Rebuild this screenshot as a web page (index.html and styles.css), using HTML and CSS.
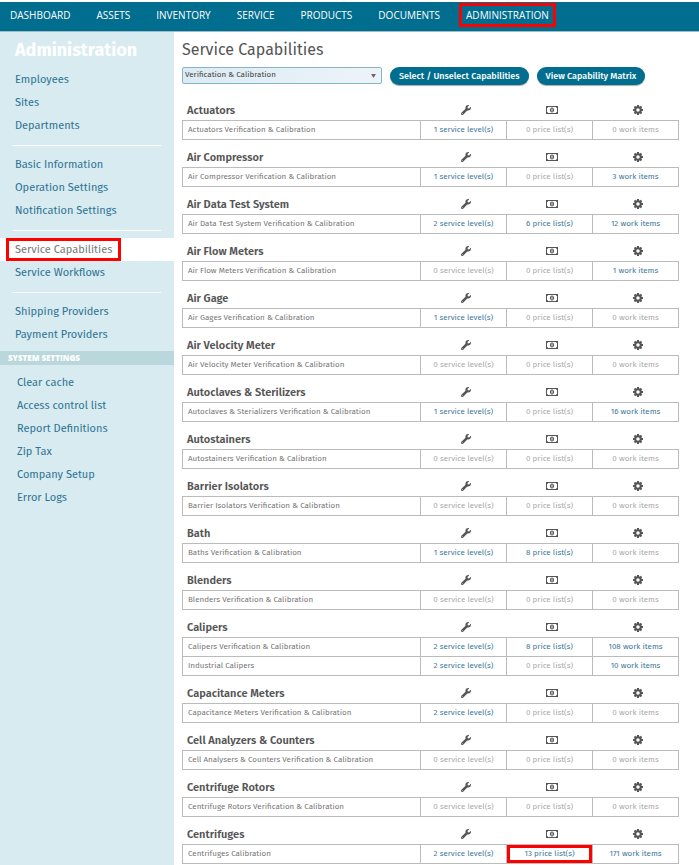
FILE: index.html
```html
<!DOCTYPE html>
<html lang="en">
<head>
  <meta charset="UTF-8" />
  <meta name="viewport" content="width=device-width, initial-scale=1" />
  <title>Service Capabilities</title>
  <link rel="stylesheet" href="styles.css">
</head>
<body>
  <svg class="sprite" aria-hidden="true">
    <symbol id="wrench" viewBox="0 0 512 512">
      <path d="M507.73 109.1c-2.24-9.03-13.54-12.09-20.12-5.51l-74.36 74.36-67.88-11.31-11.31-67.88 74.36-74.36c6.62-6.62 3.43-17.9-5.66-20.16-47.38-11.74-99.55.91-136.58 37.93-39.64 39.64-50.55 97.1-34.05 147.2L18.74 402.76c-24.99 24.99-24.99 65.51 0 90.5 24.99 24.99 65.51 24.99 90.5 0l213.21-213.21c50.12 16.71 107.47 5.68 147.37-34.22 37.07-37.07 49.7-89.32 37.91-136.73zM64 472c-13.25 0-24-10.75-24-24 0-13.26 10.75-24 24-24s24 10.74 24 24c0 13.25-10.75 24-24 24z" />
    </symbol>
    <symbol id="money" viewBox="0 0 12 8">
      <path fill-rule="evenodd" d="M0 0h12v8H0zM2 1A1 1 0 0 1 1 2v4A1 1 0 0 1 2 7h8A1 1 0 0 1 11 6v-4A1 1 0 0 1 10 1z" />
      <path fill-rule="evenodd" d="M6 1.500c1.300 0 2 1.100 2 2.500s-.7 2.500-2 2.500-2-1.100-2-2.500.7-2.500 2-2.500zM5.500 2.500v3h1v-3z" />
    </symbol>
    <symbol id="cog" viewBox="0 0 20 20">
      <circle cx="10" cy="10" r="5.500" fill="none" stroke="currentColor" stroke-width="4" />
      <path stroke="currentColor" stroke-width="4" d="M10 0v4M10 16v4M0 10h4M16 10h4M3 3l3 3M14 14l3 3M3 17l3-3M14 6l3-3" />
    </symbol>
  </svg>

  <nav class="topnav">
    <a href="#">DASHBOARD</a>
    <a href="#">ASSETS</a>
    <a href="#">INVENTORY</a>
    <a href="#">SERVICE</a>
    <a href="#">PRODUCTS</a>
    <a href="#">DOCUMENTS</a>
    <a href="#" class="marked">ADMINISTRATION</a>
  </nav>

  <div class="page">
    <aside class="sidebar">
      <h2>Administration</h2>
      <ul>
        <li><a href="#">Employees</a></li>
        <li><a href="#">Sites</a></li>
        <li><a href="#">Departments</a></li>
      </ul>
      <hr>
      <ul>
        <li><a href="#">Basic Information</a></li>
        <li><a href="#">Operation Settings</a></li>
        <li><a href="#">Notification Settings</a></li>
      </ul>
      <hr>
      <ul>
        <li class="active"><a href="#" class="marked">Service Capabilities</a></li>
        <li><a href="#">Service Workflows</a></li>
      </ul>
      <hr>
      <ul>
        <li><a href="#">Shipping Providers</a></li>
        <li><a href="#">Payment Providers</a></li>
      </ul>
      <h3>SYSTEM SETTINGS</h3>
      <ul class="system">
        <li><a href="#">Clear cache</a></li>
        <li><a href="#">Access control list</a></li>
        <li><a href="#">Report Definitions</a></li>
        <li><a href="#">Zip Tax</a></li>
        <li><a href="#">Company Setup</a></li>
        <li><a href="#">Error Logs</a></li>
      </ul>
    </aside>

    <main>
      <h1>Service Capabilities</h1>
      <div class="toolbar">
        <div class="picker">
          <select aria-label="Capability type">
            <option>Verification &amp; Calibration</option>
          </select>
          <svg viewBox="0 0 6 5"><path d="M0 0h6L3 5z" /></svg>
        </div>
        <button type="button">Select / Unselect Capabilities</button>
        <button type="button">View Capability Matrix</button>
      </div>
      <div id="capabilities"></div>
    </main>
  </div>

  <script>
    // name, then rows of [capability, service levels, price lists, work items]
    const groups = [
      ["Actuators", ["Actuators Verification & Calibration", 1, 0, 0]],
      ["Air Compressor", ["Air Compressor Verification & Calibration", 1, 0, 3]],
      ["Air Data Test System", ["Air Data Test System Verification & Calibration", 2, 6, 12]],
      ["Air Flow Meters", ["Air Flow Meters Verification & Calibration", 0, 0, 1]],
      ["Air Gage", ["Air Gages Verification & Calibration", 1, 0, 0]],
      ["Air Velocity Meter", ["Air Velocity Meter Verification & Calibration", 0, 0, 0]],
      ["Autoclaves & Sterilizers", ["Autoclaves & Sterializers Verification & Calibration", 1, 0, 16]],
      ["Autostainers", ["Autostainers Verification & Calibration", 0, 0, 0]],
      ["Barrier Isolators", ["Barrier Isolators Verification & Calibration", 0, 0, 0]],
      ["Bath", ["Baths Verification & Calibration", 1, 8, 0]],
      ["Blenders", ["Blenders Verification & Calibration", 0, 0, 0]],
      ["Calipers", ["Calipers Verification & Calibration", 2, 8, 108], ["Industrial Calipers", 2, 0, 10]],
      ["Capacitance Meters", ["Capacitance Meters Verification & Calibration", 2, 0, 0]],
      ["Cell Analyzers & Counters", ["Cell Analysers & Counters Verification & Calibration", 0, 0, 0]],
      ["Centrifuge Rotors", ["Centrifuge Rotors Verification & Calibration", 0, 0, 0]],
      ["Centrifuges", ["Centrifuges Calibration", 2, 13, 171]]
    ];

    const escape = text => text.replace(/&/g, "&amp;");
    const icon = name => `<th><svg class="${name}" aria-hidden="true"><use href="#${name}"></use></svg></th>`;

    function countCell(count, label) {
      const marked = count === 13 ? ' class="marked"' : "";
      return `<td${marked}><a href="#"${count ? "" : ' class="none"'}>${count} ${label}</a></td>`;
    }

    document.getElementById("capabilities").innerHTML = groups.map(([name, ...rows]) => `
      <table>
        <thead>
          <tr><th>${escape(name)}</th>${icon("wrench")}${icon("money")}${icon("cog")}</tr>
        </thead>
        <tbody>
          ${rows.map(([title, levels, prices, items]) => `
            <tr>
              <td>${escape(title)}</td>
              ${countCell(levels, "service level(s)")}
              ${countCell(prices, "price list(s)")}
              ${countCell(items, "work items")}
            </tr>`).join("")}
        </tbody>
      </table>`).join("");
  </script>
</body>
</html>
```
FILE: styles.css
```css
* {
  box-sizing: border-box;
}
body {
  margin: 0;
  padding-top: 2px;
  min-height: 100vh;
  display: flex;
  flex-direction: column;
  font-family: "Fira Sans", "Noto Sans", sans-serif;
  color: #555;
  background: #fff;
}
a {
  color: #2f7391;
  text-decoration: none;
}
h1, h2, h3, ul {
  margin: 0;
  padding: 0;
}
.sprite {
  position: absolute;
  width: 0;
  height: 0;
}
.marked {
  position: relative;
}
.marked::after {
  content: "";
  position: absolute;
  inset: 0;
  border: 3px solid #f00;
}

/* top bar */
.topnav {
  display: flex;
  gap: 12px;
  height: 30px;
  padding: 1px 3px 0;
  background: #026e8f;
  border-bottom: 1px solid #9dbcc6;
}
.topnav a {
  height: 24px;
  padding: 0 7px;
  font: 10px/24px "Open Sans", sans-serif;
  color: #fff;
}

/* sidebar */
.page {
  flex: 1;
  display: flex;
}
.sidebar {
  flex: 0 0 174px;
  background: #d7ebf1;
}
.sidebar h2 {
  padding: 0 15px;
  font-size: 18px;
  line-height: 36px;
  color: #fff;
}
.sidebar ul {
  list-style: none;
}
.sidebar li {
  padding-left: 6px;
  font-size: 11px;
  line-height: 23px;
}
.sidebar li a {
  display: inline-block;
  padding: 0 9px;
}
.sidebar .active {
  background: #fff;
}
.sidebar .active a {
  color: #777;
}
.sidebar hr {
  height: 1px;
  margin: 8px 13px 7px;
  border: 0;
  background: #fff;
}
.sidebar h3 {
  margin: 5px 0 6px;
  padding-left: 8px;
  font: 800 8px/14px "Open Sans", sans-serif;
  color: #fff;
  background: #bad7dc;
}
.sidebar .system li {
  padding-left: 8px;
}

/* content */
main {
  flex: 1;
  padding: 0 20px 0 8px;
}
h1 {
  font-size: 16px;
  font-weight: normal;
  line-height: 35px;
}
.toolbar {
  display: flex;
  gap: 8px;
  height: 26px;
}
.picker {
  position: relative;
  width: 200px;
  height: 17px;
}
.picker select {
  display: block;
  width: 100%;
  height: 17px;
  padding: 0 2px 2px;
  appearance: none;
  border: 1px solid #86b5c9;
  border-radius: 2px;
  background: linear-gradient(to right, #dcebf3, #edf4f9);
  font: 8px "Fira Sans", "Noto Sans", sans-serif;
  color: #444;
}
.picker svg {
  position: absolute;
  top: 7px;
  right: 6px;
  width: 5px;
  height: 4px;
  fill: #666;
}
button {
  height: 18px;
  padding: 0 9px;
  border: 0;
  border-radius: 9px;
  background: #026e8f;
  box-shadow: 0 1px 1px #aaa;
  font: 500 9px "Fira Sans", "Noto Sans", sans-serif;
  color: #fff;
  cursor: pointer;
}
table {
  width: 100%;
  table-layout: fixed;
  border-spacing: 0;
}
th, td {
  padding: 0;
  width: 86px;
  text-align: center;
}
th {
  height: 28px;
  padding: 7px 0 0 4px;
  border-bottom: 1px solid #bbb;
  font-size: 11px;
  font-weight: 600;
  line-height: 18px;
}
td {
  height: 19px;
  border: solid #bbb;
  border-width: 0 1px 1px 0;
  font-size: 8px;
  line-height: 18px;
  color: #777;
}
th:first-child, td:first-child {
  width: auto;
  padding-left: 5px;
  text-align: left;
}
th:first-child {
  padding-top: 9px;
}
td:first-child {
  border-left-width: 1px;
}
td a {
  color: #41799a;
}
td .none {
  color: #aaa;
}
th svg {
  display: block;
  margin: 0 auto;
  width: 10px;
  height: 10px;
  fill: currentColor;
}
th .money {
  width: 12px;
  height: 8px;
}
```
